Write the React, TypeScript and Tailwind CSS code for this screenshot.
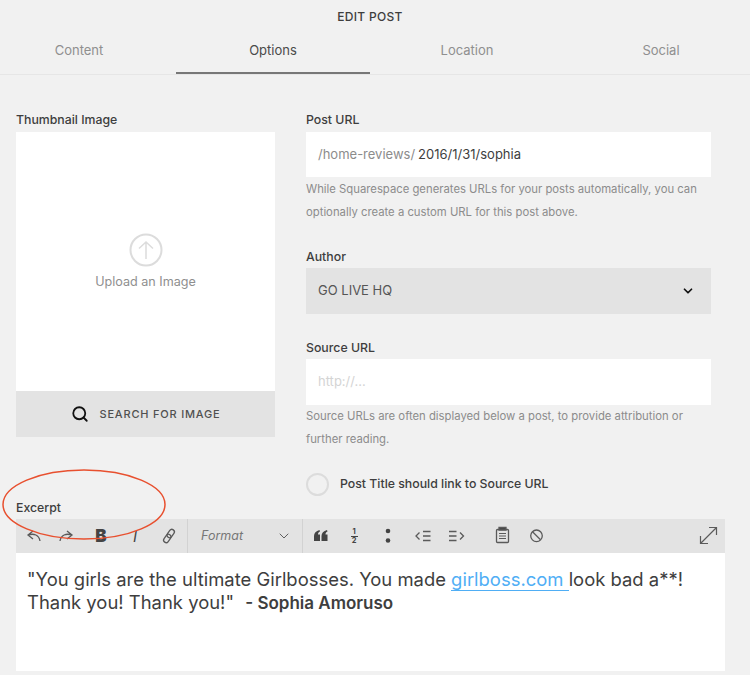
import React from "react";
import { ChevronDown, Search } from "lucide-react";

const tabs = ["Content", "Options", "Location", "Social"];

function Label({ children, tight }: { children: React.ReactNode; tight?: boolean }) {
  return (
    <div className={tight ? "h-[18px] text-[12.3px] leading-[13px] font-medium text-[#3e3e3e]" : "h-[19px] text-[12.3px] leading-[13px] font-medium text-[#3e3e3e]"}>
      {children}
    </div>
  );
}

function Help({ children }: { children: React.ReactNode }) {
  return <p className="text-[11.3px] leading-[23px] text-[#8c8c8c]">{children}</p>;
}

function Tool({ children }: { children: React.ReactNode }) {
  return <div className="flex h-[34px] w-[34px] shrink-0 items-center justify-center">{children}</div>;
}

function Icon({ children }: { children: React.ReactNode }) {
  return (
    <svg width="34" height="34" viewBox="0 0 34 34" fill="none" stroke="#5a5a5a" strokeWidth="1.300">
      {children}
    </svg>
  );
}

function Toolbar() {
  return (
    <div className="flex h-[34px] items-center bg-[#e3e3e3] text-[#444]">
      <div className="flex h-full shrink-0 border-r border-[#d2d2d2] pr-px">
        <Tool>
          <Icon>
            <path d="M17 12l-5 4 5 4M12 16c6-2 11 0 12 6" />
          </Icon>
        </Tool>
        <Tool>
          <Icon>
            <path d="M17 12l5 4-5 4M22 16c-6-2-11 0-12 6" />
          </Icon>
        </Tool>
        <Tool>
          <span className="text-[17px] leading-none font-black">B</span>
        </Tool>
        <Tool>
          <span className="text-[15px] leading-none font-normal italic">I</span>
        </Tool>
        <Tool>
          <Icon>
            <g transform="rotate(-55 17 17)">
              <rect x="9.500" y="14.500" width="9" height="5" rx="2.500" />
              <rect x="15.500" y="14.500" width="9" height="5" rx="2.500" />
            </g>
          </Icon>
        </Tool>
      </div>
      <div className="flex h-full w-[115px] shrink-0 items-center justify-between border-r border-[#d2d2d2] pl-[13px] pr-[10px]">
        <span className="text-[12.500px] italic text-[#777]">Format</span>
        <ChevronDown size={16} strokeWidth={1.400} className="text-[#555]" />
      </div>
      <Tool>
        <Icon>
          <path
            d="M11 22v-5c0-3 2-5 5.500-6l.5 1.500c-1.500.7-2 1.500-2 3h2V22zM18.500 22v-5c0-3 2-5 5.500-6l.5 1.500c-1.500.7-2 1.500-2 3h2V22z"
            fill="#444"
            stroke="none"
          />
        </Icon>
      </Tool>
      <Tool>
        <div className="flex flex-col items-center text-[7.500px] leading-[8px] font-bold">
          <span>1</span>
          <span className="h-px w-[7px] bg-[#444]" />
          <span>2</span>
        </div>
      </Tool>
      <Tool>
        <Icon>
          <circle cx="17" cy="12" r="2.300" fill="#444" stroke="none" />
          <circle cx="17" cy="21.500" r="2.300" fill="#444" stroke="none" />
        </Icon>
      </Tool>
      <Tool>
        <Icon>
          <path d="M14.500 13.500L11 17l3.500 3.500M18 12.500h7.500M18 17h7.500M18 21.500h7.500" />
        </Icon>
      </Tool>
      <Tool>
        <Icon>
          <path d="M10 12.500h7.500M10 17h7.500M10 21.500h7.500M21 13.500l3.500 3.500-3.500 3.500" />
        </Icon>
      </Tool>
      <div className="w-[12px] shrink-0" />
      <Tool>
        <Icon>
          <rect x="11.500" y="10.500" width="12" height="13" rx="1" />
          <path d="M14 8.500h7V11h-7z" fill="#444" />
          <path d="M14 14.500h7M14 17h7M14 19.500h7" strokeWidth="1" />
        </Icon>
      </Tool>
      <Tool>
        <Icon>
          <circle cx="17.500" cy="16.800" r="5.800" />
          <path d="M13.500 12.800l8 8" />
        </Icon>
      </Tool>
      <div className="ml-auto">
        <Tool>
          <Icon>
            <path d="M10 24l15-15M18 8.500h7.500V16M9.500 17v7.500H17" strokeWidth="1.200" />
          </Icon>
        </Tool>
      </div>
    </div>
  );
}

export default function App() {
  return (
    <div className="relative h-[675px] w-[750px] overflow-hidden bg-[#f1f1f1] font-['Inter',sans-serif] text-[#3e3e3e]">
      <div className="pr-[10px] pt-[10px] text-center text-[12px] leading-[13px] font-medium tracking-[0.3px]">EDIT POST</div>

      <div className="mt-[3px] border-b border-[#e6e6e6]">
        <div className="-ml-[18px] flex h-[48px] w-[776px]">
          {tabs.map((tab) => (
            <div
              key={tab}
              className={
                tab === "Options"
                  ? "flex w-[194px] items-center justify-center border-b-2 border-[#777] pt-[4px] text-[13px] text-[#4a4a4a]"
                  : "flex w-[194px] items-center justify-center pt-[2px] text-[13px] text-[#8f8f8f]"
              }
            >
              {tab}
            </div>
          ))}
        </div>
      </div>

      <div className="flex gap-[31px] pl-[16px] pt-[38px]">
        <div className="w-[259px]">
          <Label>Thumbnail Image</Label>
          <div className="flex h-[259px] flex-col items-center bg-white pt-[101px]">
            <svg width="34" height="34" viewBox="0 0 34 34" fill="none" stroke="#dcdcdc" strokeWidth="2">
              <circle cx="17" cy="17" r="15.500" />
              <path d="M17 26V9M10 15.500L17 9l7 6.500" strokeWidth="1.500" />
            </svg>
            <div className="mt-[7px] text-[12.600px] leading-[16px] text-[#8f8f8f]">Upload an Image</div>
          </div>
          <div className="flex h-[46px] items-center justify-center gap-[11px] bg-[#e3e3e3]">
            <Search size={18} strokeWidth={2.400} className="text-[#111]" />
            <span className="text-[11px] font-medium tracking-[0.8px] text-[#505050]">SEARCH FOR IMAGE</span>
          </div>
        </div>

        <div className="w-[405px]">
          <Label>Post URL</Label>
          <div className="flex h-[45px] items-center bg-white pl-[12px] text-[13px]">
            <span className="text-[#8c8c8c]">/home-reviews/</span>
            <span className="ml-[3px] text-[#3e3e3e]">2016/1/31/sophia</span>
          </div>
          <div className="pt-[0.5px]">
            <Help>
              While Squarespace generates URLs for your posts automatically, you can
              <br />
              optionally create a custom URL for this post above.
            </Help>
          </div>

          <div className="mt-[26.5px]">
            <Label tight>Author</Label>
          </div>
          <div className="flex h-[46px] items-center justify-between bg-[#e3e3e3] pl-[12px] pr-[16px] text-[13px] text-[#555]">
            <span>GO LIVE HQ</span>
            <ChevronDown size={14} strokeWidth={3} className="text-[#111]" />
          </div>

          <div className="mt-[27px]">
            <Label tight>Source URL</Label>
          </div>
          <div className="flex h-[46px] items-center bg-white pl-[12px] text-[13px] text-[#d4d4d4]">http://...</div>
          <Help>
            Source URLs are often displayed below a post, to provide attribution or
            <br />
            further reading.
          </Help>

          <div className="mt-[22px] flex items-center gap-[11px]">
            <div className="h-[23px] w-[23px] rounded-full border-2 border-[#dcdcdc]" />
            <span className="text-[12.300px] font-medium">Post Title should link to Source URL</span>
          </div>
        </div>
      </div>

      <div className="mt-[6px] pl-[16px]">
        <div className="h-[12px] text-[12.300px] leading-[12px] font-medium text-[#3e3e3e]">Excerpt</div>
        <div className="mt-[5px] w-[709px]">
          <Toolbar />
          <div className="h-[118px] bg-white pl-[11px] pt-[14.5px] text-[18.450px] leading-[23px] text-[#3e3e3e]">
            "You girls are the ultimate Girlbosses. You made{" "}
            <span className="border-b border-[#4faef5] text-[#4faef5]">girlboss.com </span> look bad a**!
            <br />
            Thank you! Thank you!" <strong className="ml-[6px] text-[17px] font-semibold">- Sophia Amoruso</strong>
          </div>
        </div>
      </div>

      {/* red hand-drawn circle on top of the screenshot */}
      <svg className="pointer-events-none absolute left-0 top-[465px]" width="170" height="80" viewBox="0 0 170 80" fill="none">
        <ellipse cx="84" cy="39.500" rx="81" ry="34.500" stroke="#e8502f" strokeWidth="1.500" />
      </svg>
    </div>
  );
}
